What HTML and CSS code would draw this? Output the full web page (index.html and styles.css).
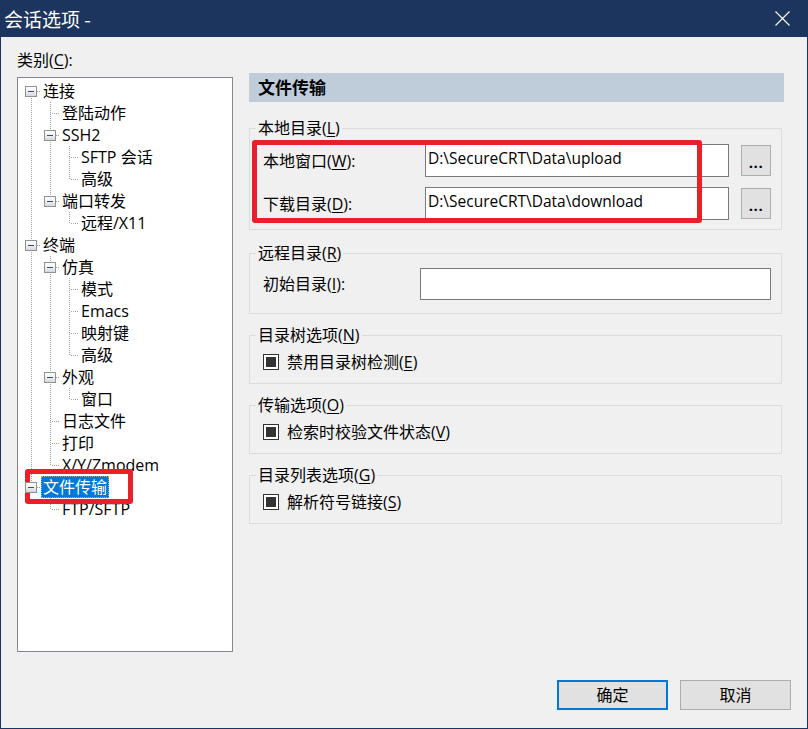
FILE: index.html
```html
<!DOCTYPE html>
<html lang="zh-CN">
<head>
<meta charset="utf-8">
<title>会话选项</title>
<link rel="stylesheet" href="styles.css">
</head>
<body>
<div class="window">
  <header class="titlebar">
    <span class="title">会话选项 -</span>
    <span class="close"><svg width="15" height="15" viewBox="0 0 15 15"><path d="M0.5 0.5L14.5 14.5M14.5 0.5L0.5 14.5" stroke="#ffffff" stroke-width="1.1" fill="none"/></svg></span>
  </header>
  <main class="content">
    <section class="left">
      <div class="cat-label">类别(<u>C</u>):</div>
      <div class="tree">
        <div class="row"><span class="c f"><span class="bx"></span></span><span class="lbl">连接</span></div>
        <div class="row"><span class="c i"></span><span class="c t"></span><span class="lbl">登陆动作</span></div>
        <div class="row"><span class="c i"></span><span class="c t"><span class="bx"></span></span><span class="lbl">SSH2</span></div>
        <div class="row"><span class="c i"></span><span class="c i"></span><span class="c t"></span><span class="lbl">SFTP 会话</span></div>
        <div class="row"><span class="c i"></span><span class="c i"></span><span class="c l"></span><span class="lbl">高级</span></div>
        <div class="row"><span class="c i"></span><span class="c l"><span class="bx"></span></span><span class="lbl">端口转发</span></div>
        <div class="row"><span class="c i"></span><span class="c e"></span><span class="c l"></span><span class="lbl">远程/X11</span></div>
        <div class="row"><span class="c t"><span class="bx"></span></span><span class="lbl">终端</span></div>
        <div class="row"><span class="c i"></span><span class="c t"><span class="bx"></span></span><span class="lbl">仿真</span></div>
        <div class="row"><span class="c i"></span><span class="c i"></span><span class="c t"></span><span class="lbl">模式</span></div>
        <div class="row"><span class="c i"></span><span class="c i"></span><span class="c t"></span><span class="lbl">Emacs</span></div>
        <div class="row"><span class="c i"></span><span class="c i"></span><span class="c t"></span><span class="lbl">映射键</span></div>
        <div class="row"><span class="c i"></span><span class="c i"></span><span class="c l"></span><span class="lbl">高级</span></div>
        <div class="row"><span class="c i"></span><span class="c t"><span class="bx"></span></span><span class="lbl">外观</span></div>
        <div class="row"><span class="c i"></span><span class="c i"></span><span class="c l"></span><span class="lbl">窗口</span></div>
        <div class="row"><span class="c i"></span><span class="c t"></span><span class="lbl">日志文件</span></div>
        <div class="row"><span class="c i"></span><span class="c t"></span><span class="lbl">打印</span></div>
        <div class="row"><span class="c i"></span><span class="c l"></span><span class="lbl">X/Y/Zmodem</span></div>
        <div class="row"><span class="c l"><span class="bx"></span></span><span class="lbl sel">文件传输</span></div>
        <div class="row"><span class="c e"></span><span class="c l"></span><span class="lbl">FTP/SFTP</span></div>
      </div>
    </section>
    <section class="right">
      <div class="page-head">文件传输</div>
      <fieldset class="group g-local">
        <legend>本地目录(<u>L</u>)</legend>
        <div class="frow">
          <span class="flabel w162">本地窗口(<u>W</u>):</span>
          <div class="input h33">D:\SecureCRT\Data\upload</div>
          <span class="browse">...</span>
        </div>
        <div class="frow">
          <span class="flabel w162">下载目录(<u>D</u>):</span>
          <div class="input h33">D:\SecureCRT\Data\download</div>
          <span class="browse">...</span>
        </div>
      </fieldset>
      <fieldset class="group g-remote">
        <legend>远程目录(<u>R</u>)</legend>
        <div class="frow">
          <span class="flabel w157">初始目录(<u>I</u>):</span>
          <div class="input h32"></div>
        </div>
      </fieldset>
      <fieldset class="group g-check">
        <legend>目录树选项(<u>N</u>)</legend>
        <div class="crow"><span class="cb"><span class="cb-fill"></span></span><span>禁用目录树检测(<u>E</u>)</span></div>
      </fieldset>
      <fieldset class="group g-check">
        <legend>传输选项(<u>O</u>)</legend>
        <div class="crow"><span class="cb"><span class="cb-fill"></span></span><span>检索时校验文件状态(<u>V</u>)</span></div>
      </fieldset>
      <fieldset class="group g-check">
        <legend>目录列表选项(<u>G</u>)</legend>
        <div class="crow"><span class="cb"><span class="cb-fill"></span></span><span>解析符号链接(<u>S</u>)</span></div>
      </fieldset>
    </section>
  </main>
  <footer class="buttons">
    <span class="btn default">确定</span>
    <span class="btn">取消</span>
  </footer>
  <div class="mark mark-tree"></div>
  <div class="mark mark-local"></div>
</div>
</body>
</html>
```
FILE: styles.css
```css
html, body {
  margin: 0;
  padding: 0;
  background: #f0f0f0;
}
body {
  font-family: "Open Sans", "Noto Sans CJK SC", sans-serif;
  font-size: 16px;
  color: #000;
}
u {
  text-decoration: underline;
  text-underline-offset: 2px;
}
.window {
  position: relative;
  width: 808px;
  height: 729px;
  box-sizing: border-box;
  border: 1px solid #1c355e;
  border-top: none;
  background: #f0f0f0;
  display: flex;
  flex-direction: column;
  overflow: hidden;
}
.titlebar {
  height: 37px;
  flex: none;
  background: #1c355e;
  color: #fff;
  display: flex;
  align-items: center;
  justify-content: space-between;
  padding: 0 17px 0 3px;
}
.title {
  font-size: 19px;
  line-height: 37px;
  font-family: "Noto Sans CJK SC", "Open Sans", sans-serif;
}
.close {
  display: flex;
  width: 15px;
  height: 15px;
}
.content {
  flex: 1;
  display: grid;
  grid-template-columns: 216px 535px;
  column-gap: 16px;
  align-items: start;
  padding: 13px 23px 0 16px;
}
.cat-label {
  line-height: 20px;
  height: 20px;
  margin-bottom: 7px;
}
.tree {
  height: 575px;
  box-sizing: border-box;
  border: 1px solid #828790;
  background: #fff;
  padding: 2px 0 0 4px;
}
.row {
  display: flex;
  height: 22px;
  line-height: 22px;
  white-space: nowrap;
}
.c {
  position: relative;
  flex: none;
  width: 19px;
  height: 22px;
}
.c.i::before,
.c.t::before,
.c.l::before,
.c.f::before {
  content: "";
  position: absolute;
  left: 9px;
  top: 0;
  width: 1px;
  height: 22px;
  background: repeating-linear-gradient(to bottom, #a0a0a0 0 1px, transparent 1px 2px);
}
.c.l::before {
  height: 12px;
}
.c.f::before {
  top: 12px;
  height: 10px;
}
.c.t::after,
.c.l::after,
.c.f::after {
  content: "";
  position: absolute;
  left: 11px;
  top: 11px;
  width: 8px;
  height: 1px;
  background: repeating-linear-gradient(to right, #a0a0a0 0 1px, transparent 1px 2px);
}
.bx {
  position: absolute;
  z-index: 1;
  left: 3px;
  top: 6px;
  width: 12px;
  height: 11px;
  box-sizing: border-box;
  border: 1px solid #919191;
  background: linear-gradient(to bottom, #ffffff 0%, #f2f2f2 45%, #d8d8d8 100%);
}
.bx::after {
  content: "";
  position: absolute;
  left: 2px;
  top: 4px;
  width: 6px;
  height: 1px;
  background: #2d4b8e;
}
.lbl {
  flex: none;
  border: 1px solid transparent;
  padding: 0 1px;
  line-height: 20px;
  height: 20px;
}
.lbl.sel {
  background: #0078d7;
  color: #fff;
  border: 1px dotted #e6a23c;
}
.right {
  margin-top: 23px;
  display: flex;
  flex-direction: column;
}
.page-head {
  height: 29px;
  line-height: 29px;
  background: #bfcddb;
  padding-left: 9px;
  font-weight: 700;
  font-size: 17px;
}
.group {
  margin: 11px 2px 0 0;
  padding: 6px 10px 10px 6px;
  border: 1px solid #dcdcdc;
  min-width: 0;
}
.group legend {
  padding: 0 2px;
  line-height: 20px;
  height: 20px;
}
.g-local {
  margin-top: 16px;
  padding-top: 6px;
  padding-bottom: 9px;
}
.g-remote {
  margin-top: 13px;
  padding-top: 5px;
  padding-bottom: 13px;
}
.frow {
  display: flex;
  align-items: center;
  padding-left: 7px;
}
.g-local .frow + .frow {
  margin-top: 10px;
}
.flabel {
  flex: none;
  line-height: 20px;
}
.w162 { width: 162px; }
.w157 { width: 157px; }
.input {
  flex: 1;
  box-sizing: border-box;
  background: #fff;
  border: 1px solid #7a7a7a;
  padding: 3px 3px 0 2px;
  line-height: 20px;
  font-size: 15.5px;
  white-space: nowrap;
  overflow: hidden;
}
.h33 { height: 33px; }
.h32 { height: 32px; }
.browse {
  flex: none;
  margin-left: 12px;
  width: 30px;
  height: 31px;
  box-sizing: border-box;
  border: 1px solid #adadad;
  background: #e1e1e1;
  display: flex;
  align-items: center;
  justify-content: center;
  line-height: 20px;
  padding-top: 2px;
  font-weight: 700;
  font-size: 15px;
  letter-spacing: 0.5px;
}
.crow {
  display: flex;
  align-items: center;
  gap: 8px;
  padding-left: 7px;
  height: 22px;
  line-height: 22px;
}
.cb {
  flex: none;
  width: 16px;
  height: 16px;
  box-sizing: border-box;
  border: 1px solid #333;
  background: #fff;
  display: flex;
  align-items: center;
  justify-content: center;
}
.cb-fill {
  width: 10px;
  height: 10px;
  background: #333;
}
.buttons {
  flex: none;
  display: flex;
  justify-content: flex-end;
  gap: 12px;
  padding: 0 16px 18px 0;
}
.btn {
  width: 111px;
  height: 30px;
  box-sizing: border-box;
  border: 1px solid #adadad;
  background: #e1e1e1;
  display: flex;
  align-items: center;
  justify-content: center;
  line-height: 20px;
}
.btn.default {
  border: 2px solid #0078d7;
}
.mark {
  position: absolute;
  box-sizing: border-box;
  border: 5px solid #ea1f29;
  border-radius: 3px;
  pointer-events: none;
}
.mark-tree {
  left: 24px;
  top: 469px;
  width: 108px;
  height: 35px;
}
.mark-local {
  left: 251px;
  top: 140px;
  width: 450px;
  height: 83px;
}
```
